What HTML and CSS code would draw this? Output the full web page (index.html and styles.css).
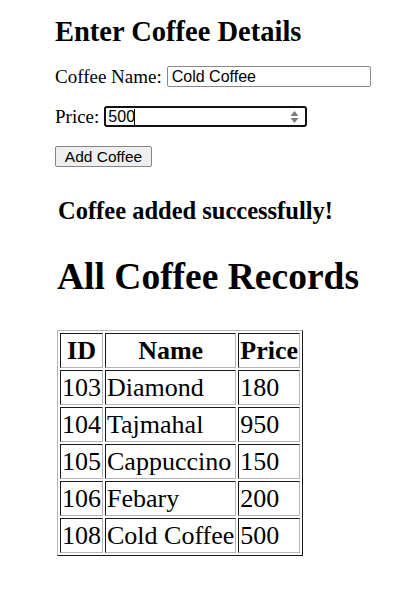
FILE: index.html
```html
<!DOCTYPE html>
<html>
<head>
<meta charset="utf-8">
<link rel="stylesheet" href="styles.css">
</head>
<body>
<main class="page">
  <h2 class="form-title">Enter Coffee Details</h2>
  <form class="coffee-form">
    <div class="row">
      <label class="label" for="name">Coffee Name:</label>
      <input class="field name-field" id="name" type="text" value="Cold Coffee">
    </div>
    <div class="row">
      <label class="label" for="price">Price:</label>
      <span class="price-wrap">
        <input class="field price-field" id="price" type="text" value="500">
        <span class="caret"></span>
        <svg class="spin" width="9" height="14" viewBox="0 0 9 14"><path d="M4.5 1 L8.5 6 L0.5 6 Z" fill="#7a7a7a"/><path d="M4.5 13 L8.5 8 L0.5 8 Z" fill="#7a7a7a"/></svg>
      </span>
    </div>
    <div class="row">
      <button class="btn" type="button">Add Coffee</button>
    </div>
  </form>
  <h3 class="message">Coffee added successfully!</h3>
  <h1 class="records-title">All Coffee Records</h1>
  <table class="records">
    <tr><th>ID</th><th>Name</th><th>Price</th></tr>
    <tr><td>103</td><td>Diamond</td><td>180</td></tr>
    <tr><td>104</td><td>Tajmahal</td><td>950</td></tr>
    <tr><td>105</td><td>Cappuccino</td><td>150</td></tr>
    <tr><td>106</td><td>Febary</td><td>200</td></tr>
    <tr><td>108</td><td>Cold Coffee</td><td>500</td></tr>
  </table>
</main>
</body>
</html>
```
FILE: styles.css
```css
html, body {
  margin: 0;
  padding: 0;
  background: #fff;
}
body {
  font-family: "Liberation Serif", "Times New Roman", serif;
  color: #000;
}
.page {
  padding: 16px 0 0 55px;
}
.form-title {
  margin: 0;
  font-size: 28.5px;
  line-height: 32px;
  font-weight: bold;
}
.coffee-form {
  margin-top: 18px;
  display: flex;
  flex-direction: column;
  gap: 19px;
}
.row {
  display: flex;
  align-items: center;
  gap: 5px;
  height: 21px;
}
.label {
  font-size: 19px;
}
.field {
  box-sizing: border-box;
  height: 21px;
  margin: 0;
  font-family: "Liberation Sans", Arial, sans-serif;
  font-size: 16px;
  color: #000;
  background: #fff;
  outline: none;
}
.name-field {
  width: 204px;
  border: 1px solid #8a8a8a;
  border-radius: 2px;
  padding: 0 4px;
}
.price-wrap {
  position: relative;
  display: inline-block;
  height: 21px;
}
.price-field {
  width: 203px;
  border: 2px solid #111;
  border-radius: 3px;
  padding: 0 2px;
}
.caret {
  position: absolute;
  left: 30px;
  top: 3px;
  width: 1px;
  height: 16px;
  background: #000;
}
.spin {
  position: absolute;
  right: 8px;
  top: 4px;
}
.btn {
  box-sizing: border-box;
  width: 97px;
  height: 21px;
  margin: 0;
  padding: 0;
  font-family: "Liberation Sans", Arial, sans-serif;
  font-size: 15.5px;
  color: #000;
  background: #efefef;
  border: 1px solid #858585;
  border-radius: 2px;
}
.message {
  margin: 30px 0 0 3px;
  font-size: 24.5px;
  line-height: 28px;
  font-weight: bold;
}
.records-title {
  margin: 31px 0 0 2px;
  font-size: 37.5px;
  line-height: 42px;
  font-weight: bold;
}
.records {
  margin: 32px 0 0 2px;
  border: 1px outset #8c8c8c;
  border-color: #b5b5b5 #6e6e6e #6e6e6e #b5b5b5;
  border-spacing: 2px;
  font-size: 26px;
}
.records th,
.records td {
  border: 1px inset #8c8c8c;
  border-color: #6e6e6e #b5b5b5 #b5b5b5 #6e6e6e;
  padding: 1px;
  line-height: 31px;
  text-align: left;
}
.records th {
  text-align: center;
  font-weight: bold;
}
```
